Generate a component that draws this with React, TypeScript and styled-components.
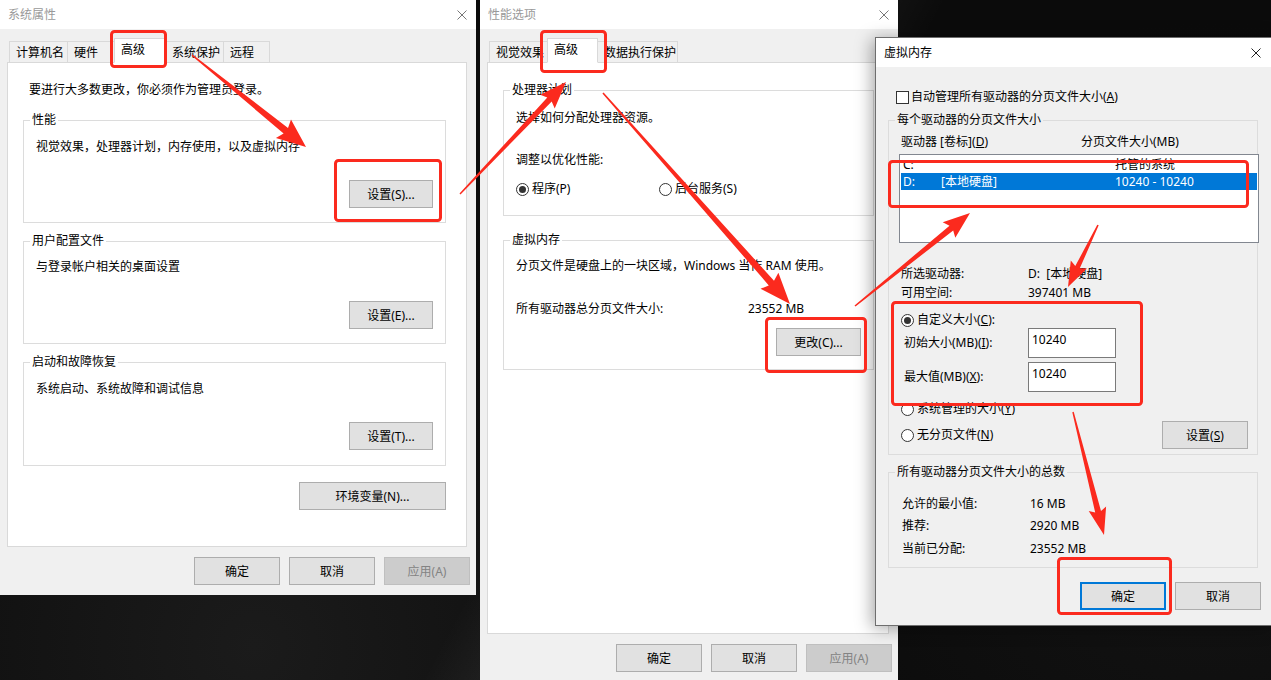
import React from "react";
import styled, { createGlobalStyle, css } from "styled-components";

const FONT = `"Noto Sans", "Noto Sans CJK SC", "DejaVu Sans", sans-serif`;
const RED = "#fb2a1e";

const GlobalStyle = createGlobalStyle`
  html, body { margin: 0; padding: 0; background: #0a0a0a; }
  body { font-family: ${FONT}; font-size: 12px; overflow: hidden; }
  * { box-sizing: border-box; }
`;

const Desktop = styled.div`
  position: relative;
  width: 1271px;
  height: 680px;
  overflow: hidden;
  color: #000;
  font-family: ${FONT};
  font-size: 12px;
  background:
    linear-gradient(118deg, transparent 48%, rgba(255,255,255,0.05) 52%, transparent 58%),
    radial-gradient(circle at 20% 95%, #1b1b1b 0, transparent 40%),
    radial-gradient(circle at 95% 70%, #141414 0, transparent 35%),
    #0b0b0b;
`;

const Window = styled.section<{ $x: number; $y: number; $w: number; $h: number; $active?: boolean }>`
  position: absolute;
  left: ${(p) => p.$x}px;
  top: ${(p) => p.$y}px;
  width: ${(p) => p.$w}px;
  height: ${(p) => p.$h}px;
  display: flex;
  flex-direction: column;
  background: #f0f0f0;
  overflow: hidden;
  ${(p) =>
    p.$active &&
    css`
      border: 1px solid #6e6e6e;
      box-shadow: -3px 2px 16px rgba(0, 0, 0, 0.35);
      z-index: 3;
    `}
`;

const TitleBar = styled.header<{ $active?: boolean; $cr: number }>`
  flex: 0 0 29px;
  height: 29px;
  background: #fff;
  display: flex;
  align-items: center;
  justify-content: space-between;
  padding: 1px ${(p) => p.$cr}px 0 8px;
  line-height: 16px;
  color: ${(p) => (p.$active ? "#000" : "#999")};
`;

const CloseIcon = ({ color }: { color: string }) => (
  <svg width="10" height="10" viewBox="0 0 10 10">
    <path d="M0.5 0.5 L9.5 9.5 M9.5 0.5 L0.5 9.5" stroke={color} strokeWidth="1" fill="none" />
  </svg>
);

const Body = styled.div<{ $pt: number; $pl: number; $pr: number }>`
  flex: 1;
  display: flex;
  flex-direction: column;
  padding: ${(p) => p.$pt}px ${(p) => p.$pr}px 0 ${(p) => p.$pl}px;
`;

const TabStrip = styled.div`
  display: flex;
  align-items: flex-end;
  height: 25px;
  padding-left: 2px;
  margin-bottom: -1px;
  position: relative;
  z-index: 1;
`;

const Tab = styled.div<{ $w: number; $sel?: boolean }>`
  width: ${(p) => p.$w}px;
  height: ${(p) => (p.$sel ? 25 : 22)}px;
  margin-left: -1px;
  &:first-child {
    margin-left: 0;
  }
  padding-left: 6px;
  display: flex;
  align-items: center;
  line-height: 16px;
  white-space: nowrap;
  border: 1px solid #d9d9d9;
  ${(p) =>
    p.$sel
      ? css`
          background: #fff;
          border-bottom-color: #fff;
          position: relative;
          z-index: 2;
          padding-bottom: 1px;
        `
      : css`
          background: #f0f0f0;
          padding-top: 1px;
        `}
`;

const Panel = styled.div<{ $h: number; $pr: number }>`
  height: ${(p) => p.$h}px;
  margin-right: 3px;
  background: #fff;
  border: 1px solid #d9d9d9;
  padding: 19px ${(p) => p.$pr}px 0 15px;
  display: flex;
  flex-direction: column;
`;

const Group = styled.fieldset<{ $mt?: number; $pb: number }>`
  margin: ${(p) => p.$mt ?? 0}px 0 0 0;
  padding: 0 12px ${(p) => p.$pb}px 12px;
  border: 1px solid #dcdcdc;
  min-width: 0;
  display: flex;
  flex-direction: column;
`;

const Legend = styled.legend`
  padding: 0 2px;
  margin-left: -6px;
  line-height: 16px;
  font-size: 12px;
`;

const Line = styled.div<{ $mt?: number; $ml?: number }>`
  line-height: 16px;
  white-space: nowrap;
  margin-top: ${(p) => p.$mt ?? 0}px;
  margin-left: ${(p) => p.$ml ?? 0}px;
`;

const KV = styled.div<{ $col: number; $mt?: number; $pl?: number }>`
  display: grid;
  grid-template-columns: ${(p) => p.$col}px auto;
  line-height: 16px;
  white-space: nowrap;
  margin-top: ${(p) => p.$mt ?? 0}px;
  padding-left: ${(p) => p.$pl ?? 0}px;
`;

const ButtonRow = styled.div<{ $mt: number; $mr?: number }>`
  display: flex;
  justify-content: flex-end;
  gap: 9px;
  margin-top: ${(p) => p.$mt}px;
  margin-right: ${(p) => p.$mr ?? 0}px;
`;

const Btn = styled.button<{ $w?: number; $focus?: boolean }>`
  width: ${(p) => p.$w ?? 86}px;
  height: 28px;
  padding: 1px 0 0;
  font-family: ${FONT};
  font-size: 12px;
  line-height: 16px;
  color: #000;
  background: #e1e1e1;
  border: ${(p) => (p.$focus ? "2px solid #0078d7" : "1px solid #adadad")};
  border-radius: 0;
  white-space: nowrap;
  &:disabled {
    background: #cccccc;
    border-color: #bfbfbf;
    color: #838383;
  }
`;

const RadioLine = styled.div<{ $mt?: number }>`
  display: flex;
  align-items: center;
  gap: 3px;
  line-height: 16px;
  white-space: nowrap;
  margin-top: ${(p) => p.$mt ?? 0}px;
`;

const RadioCircle = styled.span<{ $on?: boolean }>`
  position: relative;
  width: 13px;
  height: 13px;
  border-radius: 50%;
  border: 1px solid #333;
  background: #fff;
  flex: 0 0 13px;
  ${(p) =>
    p.$on &&
    css`
      &::after {
        content: "";
        position: absolute;
        left: 2px;
        top: 2px;
        width: 7px;
        height: 7px;
        border-radius: 50%;
        background: #333;
      }
    `}
`;

const RadioPair = styled.div<{ $mt: number }>`
  display: grid;
  grid-template-columns: 143px auto;
  margin-top: ${(p) => p.$mt}px;
`;

const CheckRow = styled.div`
  display: flex;
  align-items: center;
  gap: 2px;
  margin-left: 8px;
  line-height: 16px;
  white-space: nowrap;
`;

const CheckBox = styled.span`
  width: 13px;
  height: 13px;
  border: 1px solid #333;
  background: #fff;
`;

const HeaderRow = styled.div`
  display: grid;
  grid-template-columns: 180px auto;
  line-height: 16px;
  white-space: nowrap;
  margin-top: 6px;
`;

const ListBox = styled.div`
  height: 89px;
  margin: 4px -14px 0 -2px;
  border: 1px solid #828790;
  background: #fff;
  padding: 1px;
`;

const ListRow = styled.div<{ $sel?: boolean }>`
  display: grid;
  grid-template-columns: 38px 174px auto;
  height: 17px;
  line-height: 17px;
  padding-left: 2px;
  white-space: nowrap;
  background: ${(p) => (p.$sel ? "#0078d7" : "transparent")};
  color: ${(p) => (p.$sel ? "#fff" : "#000")};
`;

const InputRow = styled.div<{ $mt?: number }>`
  display: grid;
  grid-template-columns: 124px auto;
  align-items: center;
  height: 30px;
  padding-left: 3px;
  margin-top: ${(p) => p.$mt ?? 0}px;
  line-height: 16px;
  white-space: nowrap;
`;

const Field = styled.div`
  width: 88px;
  height: 30px;
  border: 1px solid #7a7a7a;
  background: #fff;
  padding: 3px 3px;
  line-height: 16px;
`;

const SplitRow = styled.div<{ $mt: number }>`
  display: flex;
  align-items: center;
  justify-content: space-between;
  margin-top: ${(p) => p.$mt}px;
  margin-right: -3px;
`;

const Key = styled.u`
  text-decoration: underline;
  text-underline-offset: 1px;
`;

const Overlay = styled.svg`
  position: absolute;
  left: 0;
  top: 0;
  width: 1271px;
  height: 680px;
  pointer-events: none;
  z-index: 10;
`;

type Arrow = { x1: number; y1: number; x2: number; y2: number; w0: number; w1: number; hl: number; hw: number };

function arrowPoints(a: Arrow): string {
  const dx = a.x2 - a.x1;
  const dy = a.y2 - a.y1;
  const len = Math.hypot(dx, dy);
  const ux = dx / len;
  const uy = dy / len;
  const nx = -uy;
  const ny = ux;
  const bx = a.x2 - ux * a.hl;
  const by = a.y2 - uy * a.hl;
  const pts: [number, number][] = [
    [a.x1 + (nx * a.w0) / 2, a.y1 + (ny * a.w0) / 2],
    [bx + (nx * a.w1) / 2, by + (ny * a.w1) / 2],
    [bx + (nx * a.hw) / 2 - ux * 3, by + (ny * a.hw) / 2 - uy * 3],
    [a.x2, a.y2],
    [bx - (nx * a.hw) / 2 - ux * 3, by - (ny * a.hw) / 2 - uy * 3],
    [bx - (nx * a.w1) / 2, by - (ny * a.w1) / 2],
    [a.x1 - (nx * a.w0) / 2, a.y1 - (ny * a.w0) / 2],
  ];
  return pts.map(([x, y]) => `${x.toFixed(1)},${y.toFixed(1)}`).join(" ");
}

const arrows: Arrow[] = [
  { x1: 192, y1: 55, x2: 306, y2: 147, w0: 1.5, w1: 7, hl: 26, hw: 24 },
  { x1: 460, y1: 194, x2: 566, y2: 82, w0: 1.5, w1: 6, hl: 24, hw: 20 },
  { x1: 603, y1: 93, x2: 790, y2: 304, w0: 1.5, w1: 7, hl: 28, hw: 24 },
  { x1: 855, y1: 306, x2: 970, y2: 213, w0: 1.5, w1: 6, hl: 24, hw: 20 },
  { x1: 1098, y1: 225, x2: 1068, y2: 287, w0: 1.5, w1: 5, hl: 22, hw: 18 },
  { x1: 1073, y1: 412, x2: 1104, y2: 535, w0: 1.5, w1: 6, hl: 24, hw: 18 },
];

const boxes = [
  { x: 111.5, y: 31.5, w: 54, h: 35 },
  { x: 335.5, y: 160.5, w: 105, h: 60 },
  { x: 541.5, y: 31.5, w: 64, h: 40 },
  { x: 766.5, y: 318.5, w: 99, h: 53 },
  { x: 889.5, y: 161.5, w: 358, h: 45 },
  { x: 892.5, y: 302.5, w: 249, h: 102 },
  { x: 1058.5, y: 558.5, w: 112, h: 55 },
];

const Annotations = () => (
  <Overlay viewBox="0 0 1271 680">
    {boxes.map((b, i) => (
      <rect key={i} x={b.x} y={b.y} width={b.w} height={b.h} rx={3} fill="none" stroke={RED} strokeWidth={3} />
    ))}
    {arrows.map((a, i) => (
      <polygon key={i} points={arrowPoints(a)} fill={RED} />
    ))}
  </Overlay>
);

const SystemProperties = () => (
  <Window $x={0} $y={0} $w={476} $h={595}>
    <TitleBar $cr={9}>
      <span>系统属性</span>
      <CloseIcon color="#777" />
    </TitleBar>
    <Body $pt={9} $pl={7} $pr={6}>
      <TabStrip>
        <Tab $w={59}>计算机名</Tab>
        <Tab $w={48}>硬件</Tab>
        <Tab $w={52} $sel>高级</Tab>
        <Tab $w={59}>系统保护</Tab>
        <Tab $w={47}>远程</Tab>
      </TabStrip>
      <Panel $h={485} $pr={20}>
        <Line $ml={6}>要进行大多数更改，你必须作为管理员登录。</Line>
        <Group $mt={14} $pb={14}>
          <Legend>性能</Legend>
          <Line $mt={11}>视觉效果，处理器计划，内存使用，以及虚拟内存</Line>
          <ButtonRow $mt={25}>
            <Btn $w={84}>设置(S)...</Btn>
          </ButtonRow>
        </Group>
        <Group $mt={10} $pb={14}>
          <Legend>用户配置文件</Legend>
          <Line $mt={10}>与登录帐户相关的桌面设置</Line>
          <ButtonRow $mt={26}>
            <Btn $w={84}>设置(E)...</Btn>
          </ButtonRow>
        </Group>
        <Group $mt={10} $pb={15}>
          <Legend>启动和故障恢复</Legend>
          <Line $mt={11}>系统启动、系统故障和调试信息</Line>
          <ButtonRow $mt={25}>
            <Btn $w={84}>设置(T)...</Btn>
          </ButtonRow>
        </Group>
        <ButtonRow $mt={16}>
          <Btn $w={147}>环境变量(N)...</Btn>
        </ButtonRow>
      </Panel>
      <ButtonRow $mt={10}>
        <Btn>确定</Btn>
        <Btn>取消</Btn>
        <Btn disabled>应用(A)</Btn>
      </ButtonRow>
    </Body>
  </Window>
);

const PerformanceOptions = () => (
  <Window $x={480} $y={0} $w={418} $h={700}>
    <TitleBar $cr={9}>
      <span>性能选项</span>
      <CloseIcon color="#777" />
    </TitleBar>
    <Body $pt={9} $pl={7} $pr={6}>
      <TabStrip>
        <Tab $w={59}>视觉效果</Tab>
        <Tab $w={51} $sel>高级</Tab>
        <Tab $w={81}>数据执行保护</Tab>
      </TabStrip>
      <Panel $h={572} $pr={14}>
        <Group $pb={18}>
          <Legend>处理器计划</Legend>
          <Line $mt={12}>选择如何分配处理器资源。</Line>
          <Line $mt={26}>调整以优化性能:</Line>
          <RadioPair $mt={13}>
            <RadioLine>
              <RadioCircle $on />
              <span>程序(P)</span>
            </RadioLine>
            <RadioLine>
              <RadioCircle />
              <span>后台服务(S)</span>
            </RadioLine>
          </RadioPair>
        </Group>
        <Group $mt={16} $pb={13}>
          <Legend>虚拟内存</Legend>
          <Line $mt={10}>分页文件是硬盘上的一块区域，Windows 当作 RAM 使用。</Line>
          <KV $col={232} $mt={27}>
            <span>所有驱动器总分页文件大小:</span>
            <span>23552 MB</span>
          </KV>
          <ButtonRow $mt={11}>
            <Btn $w={85}>更改(C)...</Btn>
          </ButtonRow>
        </Group>
      </Panel>
      <ButtonRow $mt={10}>
        <Btn>确定</Btn>
        <Btn>取消</Btn>
        <Btn disabled>应用(A)</Btn>
      </ButtonRow>
    </Body>
  </Window>
);

const VirtualMemory = () => (
  <Window $x={875} $y={37} $w={397} $h={589} $active>
    <TitleBar $active $cr={10}>
      <span>虚拟内存</span>
      <CloseIcon color="#222" />
    </TitleBar>
    <Body $pt={22} $pl={12} $pr={13}>
      <CheckRow>
        <CheckBox />
        <span>
          自动管理所有驱动器的分页文件大小(<Key>A</Key>)
        </span>
      </CheckRow>
      <Group $mt={7} $pb={5}>
        <Legend>每个驱动器的分页文件大小</Legend>
        <HeaderRow>
          <span>
            驱动器 [卷标](<Key>D</Key>)
          </span>
          <span>分页文件大小(MB)</span>
        </HeaderRow>
        <ListBox>
          <ListRow>
            <span>C:</span>
            <span />
            <span>托管的系统</span>
          </ListRow>
          <ListRow $sel>
            <span>D:</span>
            <span>[本地硬盘]</span>
            <span>10240 - 10240</span>
          </ListRow>
        </ListBox>
        <KV $col={127} $mt={23}>
          <span>所选驱动器:</span>
          <span>D:&nbsp;&nbsp;[本地硬盘]</span>
        </KV>
        <KV $col={127} $mt={3}>
          <span>可用空间:</span>
          <span>397401 MB</span>
        </KV>
        <RadioLine $mt={11}>
          <RadioCircle $on />
          <span>
            自定义大小(<Key>C</Key>):
          </span>
        </RadioLine>
        <InputRow>
          <span>
            初始大小(MB)(<Key>I</Key>):
          </span>
          <Field>10240</Field>
        </InputRow>
        <InputRow $mt={4}>
          <span>
            最大值(MB)(<Key>X</Key>):
          </span>
          <Field>10240</Field>
        </InputRow>
        <RadioLine $mt={9}>
          <RadioCircle />
          <span>
            系统管理的大小(<Key>Y</Key>)
          </span>
        </RadioLine>
        <SplitRow $mt={4}>
          <RadioLine>
            <RadioCircle />
            <span>
              无分页文件(<Key>N</Key>)
            </span>
          </RadioLine>
          <Btn>
            设置(<Key>S</Key>)
          </Btn>
        </SplitRow>
      </Group>
      <Group $mt={9} $pb={10}>
        <Legend>所有驱动器分页文件大小的总数</Legend>
        <KV $col={128} $mt={16} $pl={1}>
          <span>允许的最小值:</span>
          <span>16 MB</span>
        </KV>
        <KV $col={128} $mt={6} $pl={1}>
          <span>推荐:</span>
          <span>2920 MB</span>
        </KV>
        <KV $col={128} $mt={7} $pl={1}>
          <span>当前已分配:</span>
          <span>23552 MB</span>
        </KV>
      </Group>
      <ButtonRow $mt={14} $mr={-3}>
        <Btn $focus>确定</Btn>
        <Btn>取消</Btn>
      </ButtonRow>
    </Body>
  </Window>
);

export default function App() {
  return (
    <Desktop>
      <GlobalStyle />
      <SystemProperties />
      <PerformanceOptions />
      <VirtualMemory />
      <Annotations />
    </Desktop>
  );
}
